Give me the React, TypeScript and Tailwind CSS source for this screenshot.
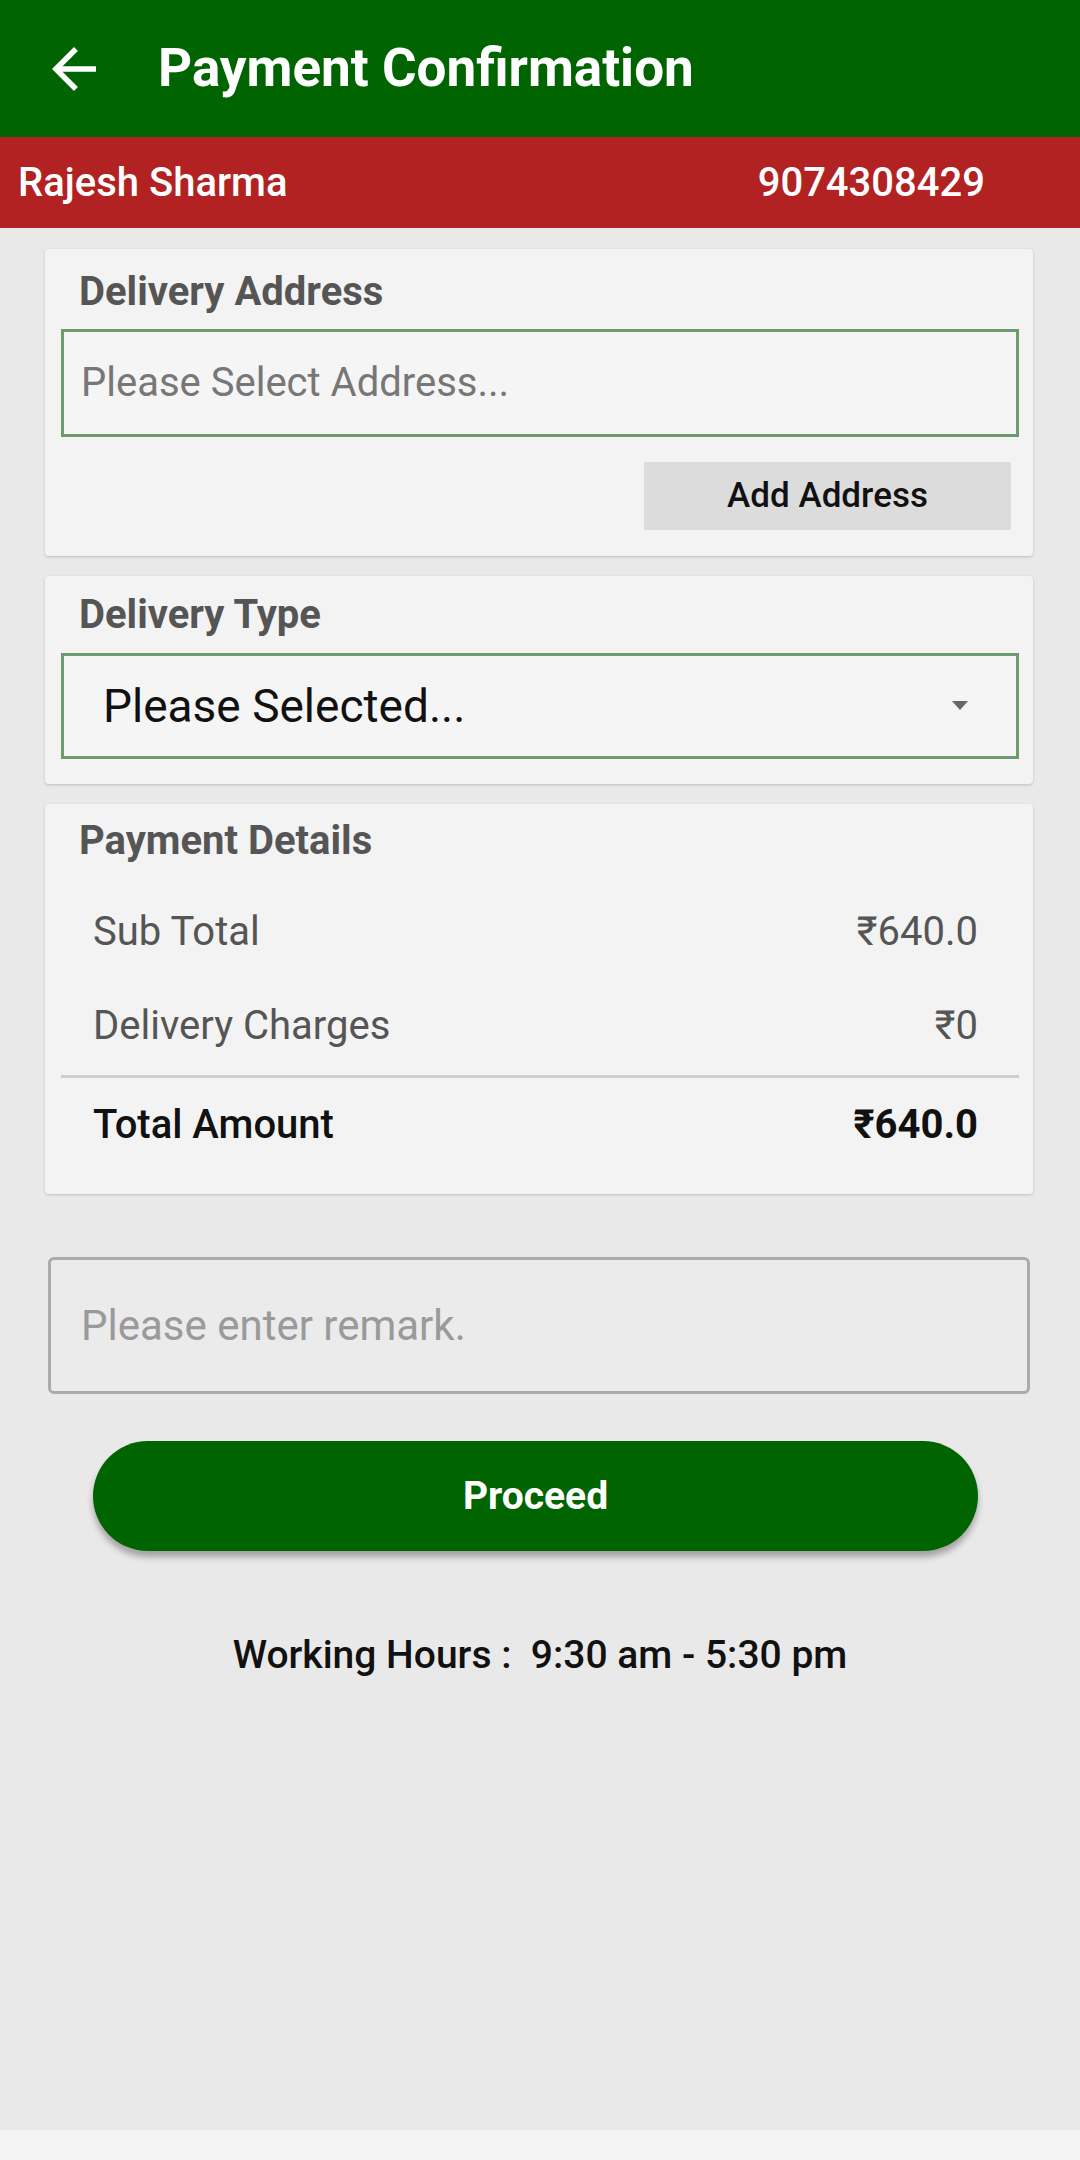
import React from "react";

const font = { fontFamily: "Roboto, 'Noto Sans', sans-serif" };

function BackArrow() {
  return (
    <svg width="66" height="66" viewBox="0 0 24 24" fill="#ffffff">
      <path d="M20 11H7.83l5.59-5.59L12 4l-8 8 8 8 1.41-1.41L7.83 13H20v-2z" />
    </svg>
  );
}

function Row({ label, value, strong }: { label: string; value: string; strong?: boolean }) {
  return (
    <div className="h-[94px] flex items-center justify-between pl-[32px] pr-[41px]">
      <span className={strong ? "text-[40px] leading-[48px] font-medium text-[#111]" : "text-[40px] leading-[48px] text-[#555]"}>
        {label}
      </span>
      <span className={strong ? "text-[40px] leading-[48px] font-bold text-[#111]" : "text-[40px] leading-[48px] text-[#555]"}>
        {value}
      </span>
    </div>
  );
}

export default function App() {
  return (
    <div className="min-h-screen bg-[#e9e9e9] flex flex-col" style={font}>
      {/* toolbar */}
      <div className="h-[137px] bg-[#006400] flex items-center pl-[41px]">
        <BackArrow />
        <h1 className="ml-[51px] text-[53px] font-bold text-white">Payment Confirmation</h1>
      </div>

      {/* customer bar */}
      <div className="h-[91px] bg-[#b22222] flex items-center justify-between pl-[18px] pr-[95px] text-white">
        <span className="text-[40px] font-medium">Rajesh Sharma</span>
        <span className="text-[40px] font-medium">9074308429</span>
      </div>

      <div className="mt-[21px] ml-[45px] mr-[47px] flex flex-col gap-[20px]">
        {/* delivery address */}
        <div className="bg-[#f3f3f3] rounded-[4px] shadow-[0_1px_3px_rgba(0,0,0,0.18)] pt-[19px] pb-[26px] pl-[16px] pr-[14px]">
          <p className="pl-[18px] text-[40px] leading-[48px] font-bold text-[#555]">Delivery Address</p>
          <div className="mt-[13px] h-[108px] border-[3px] border-[#6f9b6f] bg-[#f5f5f5] flex items-center pl-[17px]">
            <span className="text-[40px] text-[#777]">Please Select Address...</span>
          </div>
          <div className="mt-[25px] flex justify-end pr-[8px]">
            <button className="w-[367px] h-[68px] bg-[#dcdcdc] text-[35px] font-medium text-[#111]">Add Address</button>
          </div>
        </div>

        {/* delivery type */}
        <div className="bg-[#f3f3f3] rounded-[4px] shadow-[0_1px_3px_rgba(0,0,0,0.18)] pt-[15px] pb-[25px] pl-[16px] pr-[14px]">
          <p className="pl-[18px] text-[40px] leading-[48px] font-bold text-[#555]">Delivery Type</p>
          <div className="mt-[14px] h-[106px] border-[3px] border-[#6f9b6f] bg-[#f5f5f5] flex items-center justify-between pl-[39px] pr-[48px]">
            <span className="text-[46px] text-[#111]">Please Selected...</span>
            <svg width="16" height="10" viewBox="0 0 16 10">
              <path d="M0 0h16L8 9z" fill="#666" />
            </svg>
          </div>
        </div>

        {/* payment details */}
        <div className="bg-[#f3f3f3] rounded-[4px] shadow-[0_1px_3px_rgba(0,0,0,0.18)] pt-[13px] pb-[22px] pl-[16px] pr-[14px]">
          <p className="pl-[18px] text-[40px] leading-[48px] font-bold text-[#555]">Payment Details</p>
          <div className="mt-[20px]">
            <Row label="Sub Total" value="₹640.0" />
            <Row label="Delivery Charges" value="₹0" />
            <div className="mt-[2px] h-[3px] bg-[#cfcfcf]" />
            <Row label="Total Amount" value="₹640.0" strong />
          </div>
        </div>
      </div>

      {/* remark */}
      <div className="mt-[63px] ml-[48px] mr-[50px] h-[137px] border-[3px] border-[#ababab] rounded-[6px] bg-[#ebebeb] flex items-center pl-[30px]">
        <span className="text-[42px] text-[#9a9a9a]">Please enter remark.</span>
      </div>

      {/* proceed */}
      <div className="mt-[47px] ml-[93px] mr-[102px]">
        <button className="w-full h-[110px] rounded-full bg-[#006400] text-white text-[39px] font-bold shadow-[0_6px_6px_rgba(0,0,0,0.3)]">
          Proceed
        </button>
      </div>

      <p className="mt-[81px] text-center text-[39px] leading-[46px] font-medium text-[#111] whitespace-pre">
        {"Working Hours :  9:30 am - 5:30 pm"}
      </p>

      <div className="mt-auto h-[30px] bg-[#f3f3f3]" />
    </div>
  );
}
